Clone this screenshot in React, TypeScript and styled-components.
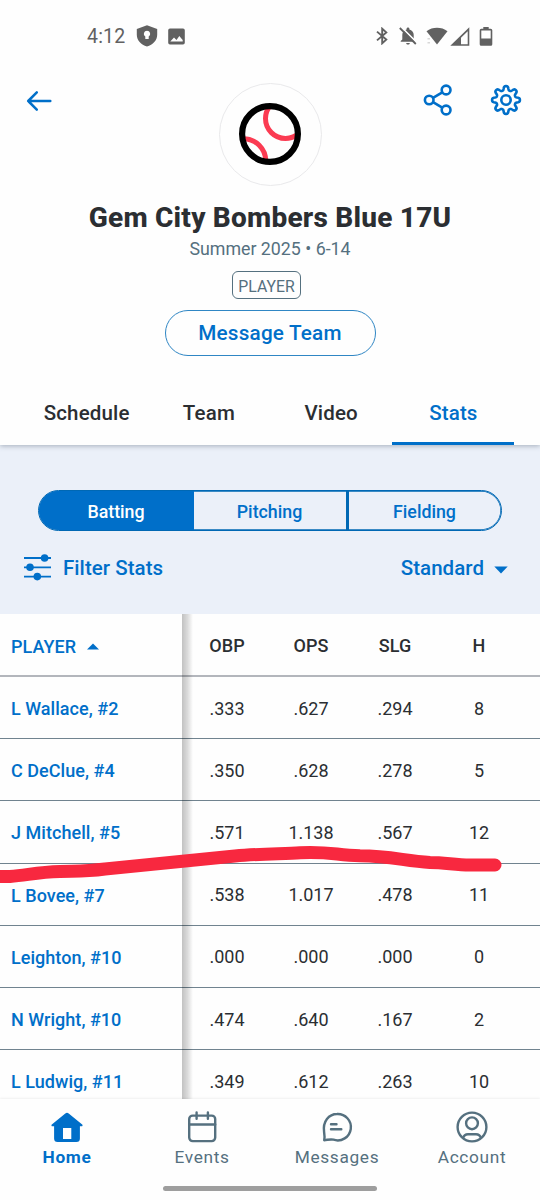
import React from "react";
import styled, { createGlobalStyle } from "styled-components";

const BLUE = "#006fc9";
const INK = "#2b2e32";
const SLATE = "#55707f";

const GlobalStyle = createGlobalStyle`
  *, *::before, *::after { box-sizing: border-box; }
  body {
    margin: 0;
    background: #fefefe;
    font-family: Roboto, "Liberation Sans", sans-serif;
    color: ${INK};
  }
  button { font-family: inherit; background: none; border: 0; padding: 0; margin: 0; }
  svg { display: block; flex: none; }
`;

const Screen = styled.div`
  position: relative;
  display: flex;
  flex-direction: column;
  width: 540px;
  height: 1200px;
  overflow: hidden;
`;

const StatusBar = styled.div`
  display: flex;
  align-items: center;
  justify-content: space-between;
  height: 72px;
  flex: none;
  padding: 0 47px 0 87px;
  color: #616161;
`;

const StatusGroup = styled.div<{ $gap?: number }>`
  display: flex;
  align-items: center;
  gap: ${(p) => p.$gap ?? 0}px;
`;

const Clock = styled.span`
  padding-top: 1px;
  font-size: 19.5px;
  line-height: 24px;
  letter-spacing: 0.2px;
`;

const Header = styled.header`
  display: flex;
  flex-direction: column;
  align-items: center;
  height: 308px;
  flex: none;
`;

const TopRow = styled.div`
  display: grid;
  grid-template-columns: 1fr 103px 1fr;
  width: 100%;
  padding: 11px 18px 0 19px;
  margin-bottom: 14px;
`;

const BackButton = styled.button`
  justify-self: start;
  align-self: start;
  margin: 7px 0 0 7px;
  color: ${BLUE};
`;

const TopActions = styled.div`
  display: flex;
  justify-self: end;
  gap: 37px;
  color: ${BLUE};
`;

const Crest = styled.div`
  display: flex;
  align-items: center;
  justify-content: center;
  width: 103px;
  height: 103px;
  padding: 0 1px 2px 0;
  border: 1px solid #e9e9eb;
  border-radius: 50%;
`;

const TeamName = styled.h1`
  margin: 0;
  font-size: 28px;
  font-weight: 800;
  line-height: 36px;
  letter-spacing: 0.22px;
  white-space: nowrap;
`;

const Season = styled.div`
  margin-top: 2px;
  font-size: 17.8px;
  line-height: 22px;
  color: ${SLATE};
`;

const RoleTag = styled.div`
  display: flex;
  align-items: center;
  justify-content: center;
  width: 69px;
  height: 28px;
  margin: 11px 7px 0 0;
  padding-top: 2px;
  border: 1.5px solid ${SLATE};
  border-radius: 6px;
  font-size: 15.8px;
  color: ${SLATE};
`;

const MessageButton = styled.button`
  width: 211px;
  height: 46px;
  margin-top: 11px;
  border: 1px solid #2f86c4;
  border-radius: 23px;
  color: ${BLUE};
  font-size: 20.7px;
  font-weight: 500;
  letter-spacing: 0.2px;
`;

const Tabs = styled.nav`
  position: relative;
  z-index: 1;
  display: grid;
  grid-template-columns: repeat(4, 1fr);
  height: 65px;
  flex: none;
  padding: 0 26px 0 25px;
  background: #fefefe;
  box-shadow: 0 1px 5px rgba(60, 75, 95, 0.4);
  clip-path: inset(0 0 -10px 0);
`;

const Tab = styled.button<{ $active?: boolean }>`
  border-bottom: 3px solid ${(p) => (p.$active ? BLUE : "transparent")};
  padding: 3px 0 0 1px;
  font-size: 20.5px;
  font-weight: 500;
  letter-spacing: 0.15px;
  color: ${(p) => (p.$active ? BLUE : INK)};
`;

const Controls = styled.section`
  height: 169px;
  flex: none;
  padding: 45px 32px 0 24px;
  background: #ebf0f9;
`;

const Segments = styled.div`
  display: grid;
  grid-template-columns: 155px 152px 1fr;
  width: 464px;
  height: 41px;
  margin-left: 14px;
  border: 1px solid #0068b4;
  box-shadow: inset 0 0 0 0.7px #0068b4;
  border-radius: 21px;
  overflow: hidden;
`;

const Segment = styled.button<{ $active?: boolean; $divided?: boolean }>`
  background: ${(p) => (p.$active ? BLUE : "transparent")};
  color: ${(p) => (p.$active ? "#fff" : BLUE)};
  border-left: ${(p) => (p.$divided ? "3px solid #0068b4" : "0")};
  padding: 1px 1px 0 0;
  font-size: 17.8px;
  font-weight: 500;
`;

const FilterRow = styled.div`
  display: flex;
  align-items: center;
  justify-content: space-between;
  height: 28px;
  margin-top: 23px;
`;

const FilterButton = styled.button<{ $gap: number }>`
  display: flex;
  align-items: center;
  gap: ${(p) => p.$gap}px;
  color: ${BLUE};
  font-size: 20.5px;
  font-weight: 500;
  letter-spacing: 0.05px;
`;

const Table = styled.div`
  position: relative;
  height: 485px;
  flex: none;
  overflow: hidden;
`;

const Row = styled.div<{ $head?: boolean }>`
  display: grid;
  grid-template-columns: 182px repeat(4, 84px);
  align-items: center;
  height: ${(p) => (p.$head ? 63 : 62.2)}px;
  padding-top: ${(p) => (p.$head ? 3 : 2)}px;
  border-bottom: ${(p) => (p.$head ? "2px solid #b3b6bc" : "1px solid #70838f")};
  font-size: 18px;
  font-weight: ${(p) => (p.$head ? 500 : 400)};
`;

const Stat = styled.div`
  padding: 0 0 1px 6px;
  text-align: center;
`;

const Player = styled.div`
  display: flex;
  align-items: center;
  gap: 11px;
  padding-left: 11px;
  color: ${BLUE};
  font-weight: 500;
  letter-spacing: 0.04px;
  white-space: nowrap;
`;

const ColumnShadow = styled.div`
  position: absolute;
  top: 0;
  bottom: 0;
  left: 182px;
  width: 11px;
  background: linear-gradient(to right, rgba(0, 0, 0, 0.24), rgba(0, 0, 0, 0.14) 50%, transparent);
`;

const Marker = styled.svg`
  position: absolute;
  left: 0;
  top: 840px;
  z-index: 2;
`;

const BottomNav = styled.nav`
  display: grid;
  grid-template-columns: repeat(4, 135px);
  height: 101px;
  flex: none;
  background: #fefefe;
  box-shadow: 0 -1px 2px rgba(0, 0, 0, 0.06);
  z-index: 1;
`;

const NavItem = styled.button<{ $active?: boolean }>`
  display: flex;
  flex-direction: column;
  align-items: center;
  gap: 2px;
  padding: 12px 1px 0 0;
  color: ${(p) => (p.$active ? BLUE : SLATE)};
  font-size: 17.3px;
  line-height: 24px;
  font-weight: ${(p) => (p.$active ? 700 : 400)};
  letter-spacing: 0.65px;
`;

const HomeIndicator = styled.div`
  position: absolute;
  left: 163px;
  bottom: 9px;
  z-index: 2;
  width: 214px;
  height: 5px;
  border-radius: 3px;
  background: #9e9e9e;
`;

const ShieldIcon = () => (
  <svg width="22" height="22" viewBox="0 0 22 22" fill="currentColor">
    <path fillRule="evenodd" d="M11 .3 21.2 4v5.8c0 5.500-4.200 9.900-10.200 11.800C5 19.700.8 15.300.8 9.800V4ZM11 5.700a3.200 3.200 0 0 0-1.700 5.900V14h3.400v-2.400A3.200 3.200 0 0 0 11 5.700Z" />
  </svg>
);

const PhotoIcon = () => (
  <svg width="17" height="17" viewBox="0 0 17 17" fill="currentColor">
    <path fillRule="evenodd" d="M2 .5h13a1.800 1.800 0 0 1 1.800 1.800v12.400a1.800 1.800 0 0 1-1.800 1.800H2a1.800 1.800 0 0 1-1.800-1.800V2.300A1.800 1.800 0 0 1 2 .5ZM2.300 13.600h12.400v-1.500L11.300 8l-2.800 4-2.500-2.500-3.700 4.100Z" />
  </svg>
);

const BluetoothIcon = () => (
  <svg width="12" height="18" viewBox="0 0 12 18" fill="none" stroke="currentColor" strokeWidth="1.9">
    <path d="m1 4.600 9.300 8L6.200 16.300V1.700l4.100 3.700L1 13.400" />
  </svg>
);

const BellOffIcon = () => (
  <svg width="18" height="18" viewBox="0 0 18 18">
    <path fill="currentColor" d="M9 .5c.8 0 1.400.6 1.400 1.300v.6c2.500.6 4.300 2.700 4.300 5.400v4.700l1.600 1.500v.8H1.700v-.8l1.600-1.500V7.800c0-2.700 1.800-4.800 4.300-5.400v-.6C7.600 1.100 8.200.5 9 .5ZM7.200 15.900h3.600c0 1-.8 1.700-1.800 1.700s-1.800-.7-1.800-1.700Z" />
    <path d="M2.200 0 18 15.800" stroke="#fefefe" strokeWidth="1.700" />
    <path d="m.8 1 16 16" stroke="currentColor" strokeWidth="1.800" />
  </svg>
);

const WifiIcon = () => (
  <svg width="22" height="18" viewBox="0 0 22 18">
    <path fill="currentColor" d="M.5 4.300C6.500-.3 15.500-.3 21.500 4.300L11 17.500Z" />
    <path fill="#d8d8d8" d="M1.500 11h2.500v1.500H1.500zM1.500 15h2.500v1.500H1.500z" />
  </svg>
);

const SignalIcon = () => (
  <svg width="20" height="19" viewBox="0 0 20 19">
    <path fill="currentColor" fillRule="evenodd" d="M.3 18.700 19.300.2v18.500ZM11 10.800v6.400h6.700V4.200Z" />
  </svg>
);

const BatteryIcon = () => (
  <svg width="14" height="19" viewBox="0 0 14 19">
    <path fill="currentColor" fillRule="evenodd" d="M4.300 0h5.400v1.700h2A1.600 1.600 0 0 1 13.300 3.300v13.900a1.500 1.500 0 0 1-1.500 1.500H2.200a1.500 1.500 0 0 1-1.500-1.500V3.300a1.600 1.600 0 0 1 1.600-1.600h2ZM2.300 3.600v7.900h9.400V3.600Z" />
  </svg>
);

const ArrowIcon = () => (
  <svg width="26" height="22" viewBox="0 0 26 22" fill="none" stroke="currentColor" strokeWidth="2.500" strokeLinecap="round" strokeLinejoin="round">
    <path d="M24.300 11H2.200M10.800 2.400 2.200 11l8.600 8.600" />
  </svg>
);

const ShareIcon = () => (
  <svg width="30" height="34" viewBox="0 0 30 34" fill="none" stroke="currentColor" strokeWidth="2.600">
    <circle cx="6.200" cy="17" r="4.300" />
    <circle cx="23.100" cy="7" r="4.400" />
    <circle cx="23.100" cy="27" r="4.400" />
    <path d="m10 14.800 9.300-5.500M10 19.200l9.300 5.500" />
  </svg>
);

const gearPath = (() => {
  const points: string[] = [];
  for (let i = 0; i <= 144; i++) {
    const a = (i / 144) * Math.PI * 2;
    const wave = Math.cos(8 * a);
    const r = 11.9 + (2 * Math.tanh(wave * 1.8)) / Math.tanh(1.8);
    points.push(`${(16 + r * Math.sin(a)).toFixed(2)} ${(16 - r * Math.cos(a)).toFixed(2)}`);
  }
  return `M${points.join("L")}Z`;
})();

const GearIcon = () => (
  <svg width="32" height="34" viewBox="0 -1 32 34" fill="none" stroke="currentColor" strokeWidth="2.600" strokeLinejoin="round">
    <path d={gearPath} />
    <circle cx="16" cy="16" r="4.700" />
  </svg>
);

const BaseballIcon = () => (
  <svg width="64" height="64" viewBox="0 0 64 64" fill="none">
    <clipPath id="ball">
      <circle cx="32" cy="32" r="28" />
    </clipPath>
    <g stroke="#fb3b52" strokeWidth="5" clipPath="url(#ball)">
      <circle cx="47.500" cy="16.500" r="20" />
      <circle cx="5.300" cy="59.200" r="22.500" />
    </g>
    <circle cx="32" cy="32" r="27.900" stroke="#000" strokeWidth="6.200" />
  </svg>
);

const SlidersIcon = () => (
  <svg width="27" height="28" viewBox="0 0 27 28" fill="currentColor">
    <path d="M0 4h27M0 13.300h27M0 22.600h27" stroke="currentColor" strokeWidth="1.800" />
    <circle cx="20.600" cy="4" r="3.800" />
    <circle cx="6" cy="13.300" r="3.800" />
    <circle cx="13.300" cy="22.600" r="3.800" />
  </svg>
);

const CaretDown = () => (
  <svg width="14" height="11" viewBox="0 0 14 11" fill="currentColor">
    <path d="M.3 3.500h13.400L7 10.500Z" />
  </svg>
);

const CaretUp = () => (
  <svg width="12" height="7" viewBox="0 0 12 7" fill="currentColor">
    <path d="M0 6.500h12L6 .5Z" />
  </svg>
);

const HomeIcon = () => (
  <svg width="32" height="32" viewBox="0 0 32 32" fill="currentColor">
    <path fillRule="evenodd" d="M14.300 2.500a2.600 2.600 0 0 1 3.400 0l13.500 10.900c.7.700.4 1.900-.7 1.900h-1.600v12.200a3.500 3.500 0 0 1-3.500 3.500H6.600a3.500 3.500 0 0 1-3.500-3.500V15.300H1.500c-1.100 0-1.400-1.200-.7-1.900ZM12 17v11h8.300V17Z" />
  </svg>
);

const CalendarIcon = () => (
  <svg width="32" height="32" viewBox="0 0 32 32" fill="none" stroke="currentColor" strokeWidth="2.400" strokeLinecap="round">
    <rect x="3.200" y="4.600" width="26" height="25.500" rx="3.500" />
    <path d="M3.200 13.500h26M10.600 1.400v6.300M21.900 1.400v6.300" />
  </svg>
);

const ChatIcon = () => (
  <svg width="32" height="32" viewBox="0 0 32 32" fill="none" stroke="currentColor" strokeWidth="2.400" strokeLinecap="round" strokeLinejoin="round">
    <path d="M3.200 29.200c.7-3 .3-5.600-.1-8.200C1.500 10.500 8 3 16 3a13.200 13.200 0 1 1-3.500 25.700c-3.200-.8-6 .3-9.300.5Z" />
    <path d="M10 13.300h5.500M10 18.200h10.300" />
  </svg>
);

const AccountIcon = () => (
  <svg width="32" height="32" viewBox="0 0 32 32" fill="none" stroke="currentColor" strokeWidth="2.400">
    <circle cx="16" cy="16" r="14.400" />
    <circle cx="16" cy="12.300" r="5.900" />
    <path d="M7 27.200c.8-2.700 2.300-3.900 5-3.900h8c2.700 0 4.200 1.200 5 3.900" />
  </svg>
);

const players: [string, string, string, string, string][] = [
  ["L Wallace, #2", ".333", ".627", ".294", "8"],
  ["C DeClue, #4", ".350", ".628", ".278", "5"],
  ["J Mitchell, #5", ".571", "1.138", ".567", "12"],
  ["L Bovee, #7", ".538", "1.017", ".478", "11"],
  ["Leighton, #10", ".000", ".000", ".000", "0"],
  ["N Wright, #10", ".474", ".640", ".167", "2"],
  ["L Ludwig, #11", ".349", ".612", ".263", "10"],
];

export default function App() {
  return (
    <Screen>
      <GlobalStyle />
      <StatusBar>
        <StatusGroup $gap={10.5}>
          <Clock>4:12</Clock>
          <ShieldIcon />
          <PhotoIcon />
        </StatusGroup>
        <StatusGroup $gap={9}>
          <StatusGroup $gap={11}>
            <BluetoothIcon />
            <BellOffIcon />
          </StatusGroup>
          <StatusGroup $gap={2}>
            <WifiIcon />
            <SignalIcon />
          </StatusGroup>
          <BatteryIcon />
        </StatusGroup>
      </StatusBar>

      <Header>
        <TopRow>
          <BackButton aria-label="Back">
            <ArrowIcon />
          </BackButton>
          <Crest>
            <BaseballIcon />
          </Crest>
          <TopActions>
            <ShareIcon />
            <GearIcon />
          </TopActions>
        </TopRow>
        <TeamName>Gem City Bombers Blue 17U</TeamName>
        <Season>Summer 2025 • 6-14</Season>
        <RoleTag>PLAYER</RoleTag>
        <MessageButton>Message Team</MessageButton>
      </Header>

      <Tabs>
        <Tab>Schedule</Tab>
        <Tab>Team</Tab>
        <Tab>Video</Tab>
        <Tab $active>Stats</Tab>
      </Tabs>

      <Controls>
        <Segments>
          <Segment $active>Batting</Segment>
          <Segment>Pitching</Segment>
          <Segment $divided>Fielding</Segment>
        </Segments>
        <FilterRow>
          <FilterButton $gap={12}>
            <SlidersIcon />
            Filter Stats
          </FilterButton>
          <FilterButton $gap={10}>
            Standard
            <CaretDown />
          </FilterButton>
        </FilterRow>
      </Controls>

      <Table>
        <Row $head>
          <Player>
            PLAYER
            <CaretUp />
          </Player>
          {["OBP", "OPS", "SLG", "H"].map((name) => (
            <Stat key={name}>{name}</Stat>
          ))}
        </Row>
        {players.map(([name, ...stats]) => (
          <Row key={name}>
            <Player>{name}</Player>
            {stats.map((value, i) => (
              <Stat key={i}>{value}</Stat>
            ))}
          </Row>
        ))}
        <ColumnShadow />
      </Table>

      <BottomNav>
        <NavItem $active>
          <HomeIcon />
          Home
        </NavItem>
        <NavItem>
          <CalendarIcon />
          Events
        </NavItem>
        <NavItem>
          <ChatIcon />
          Messages
        </NavItem>
        <NavItem>
          <AccountIcon />
          Account
        </NavItem>
      </BottomNav>

      <Marker width="540" height="50" viewBox="0 840 540 50" fill="none" stroke="#f8283f" strokeWidth="13" strokeLinecap="round" strokeLinejoin="round">
        <path d="M-8 876.500H10C28 875 38 872 60 871.500C80 871 86 871.500 105 869L180 861.500L235 856C260 853.500 285 854 300 852.800C330 851.500 335 855 360 855.800C390 856 405 861 430 862.500C445 862.500 455 865 470 865H495" />
      </Marker>
      <HomeIndicator />
    </Screen>
  );
}
